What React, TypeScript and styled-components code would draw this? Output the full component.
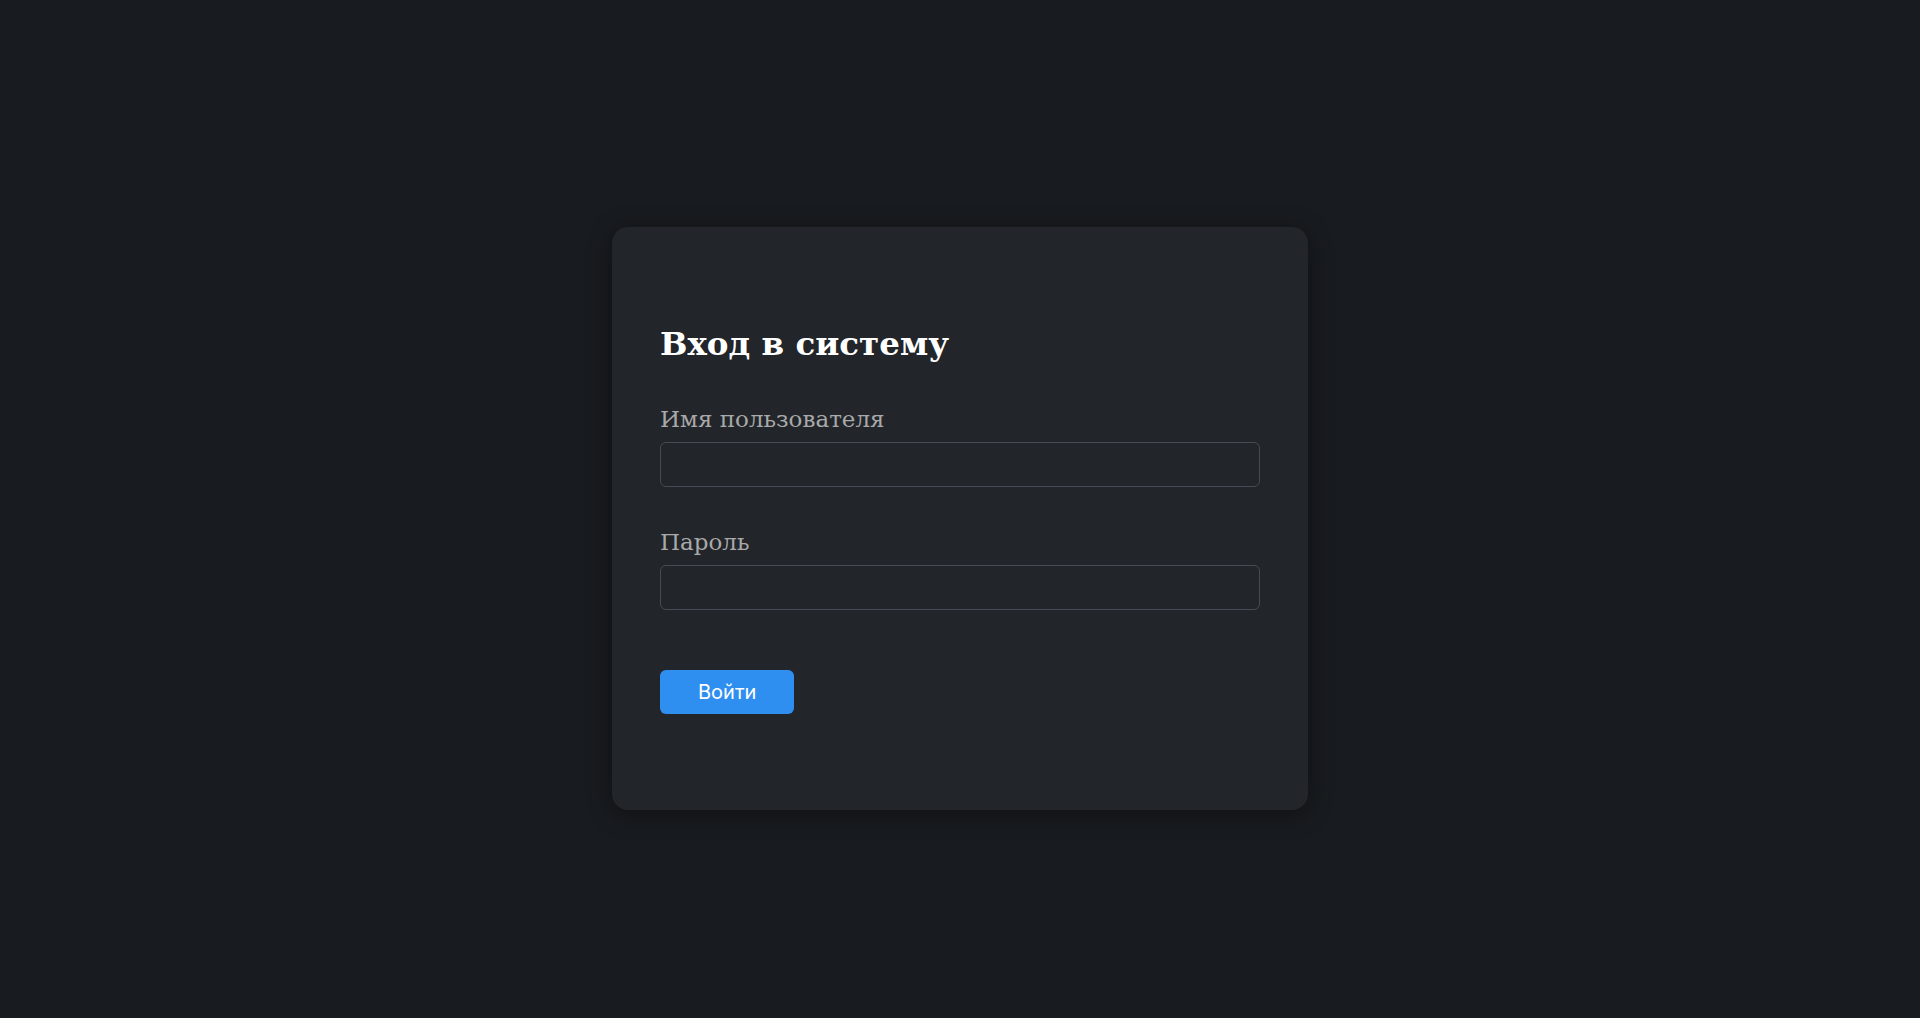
import React from "react";
import styled, { createGlobalStyle } from "styled-components";

const GlobalStyle = createGlobalStyle`
  html, body {
    background: #181b1f;
  }
  body {
    margin: 8px;
    font-family: "DejaVu Serif", serif;
  }
`;

const Screen = styled.div`
  box-sizing: border-box;
  min-height: 100vh;
  padding-top: 2px;
  display: flex;
  align-items: center;
  justify-content: center;
`;

const Card = styled.form`
  box-sizing: border-box;
  width: 696px;
  padding: 97px 48px 96px;
  background: #222529;
  border-radius: 16px;
  box-shadow: 0 4px 24px rgba(0, 0, 0, 0.35);
  display: flex;
  flex-direction: column;
  align-items: stretch;
`;

const Title = styled.h2`
  margin: 0 0 41px;
  font-family: "DejaVu Serif", serif;
  font-size: 32.5px;
  line-height: 40px;
  font-weight: 700;
  color: #ffffff;
`;

const Field = styled.div<{ $last?: boolean }>`
  display: flex;
  flex-direction: column;
  margin-bottom: ${(p) => (p.$last ? "60px" : "41px")};
`;

const Label = styled.label`
  font-family: "DejaVu Serif", serif;
  font-size: 23px;
  line-height: 28px;
  color: #a9a9a9;
  margin-bottom: 9px;
`;

const Input = styled.input`
  box-sizing: border-box;
  width: 100%;
  height: 45px;
  padding: 0 12px;
  background: #222529;
  border: 1.5px solid #454c56;
  border-radius: 6px;
  color: #ffffff;
  font-size: 18px;
  outline: none;
`;

const Button = styled.button`
  align-self: flex-start;
  box-sizing: border-box;
  height: 44px;
  padding: 0 38px;
  background: #2e8ff0;
  border: none;
  border-radius: 6px;
  color: #ffffff;
  font-family: Inter, "Noto Sans", sans-serif;
  font-size: 20px;
  line-height: 44px;
  cursor: pointer;
`;

export default function App() {
  return (
    <>
      <GlobalStyle />
      <Screen>
        <Card onSubmit={(e) => e.preventDefault()}>
          <Title>Вход в систему</Title>
          <Field>
            <Label htmlFor="username">Имя пользователя</Label>
            <Input id="username" type="text" />
          </Field>
          <Field $last>
            <Label htmlFor="password">Пароль</Label>
            <Input id="password" type="password" />
          </Field>
          <Button type="submit">Войти</Button>
        </Card>
      </Screen>
    </>
  );
}
